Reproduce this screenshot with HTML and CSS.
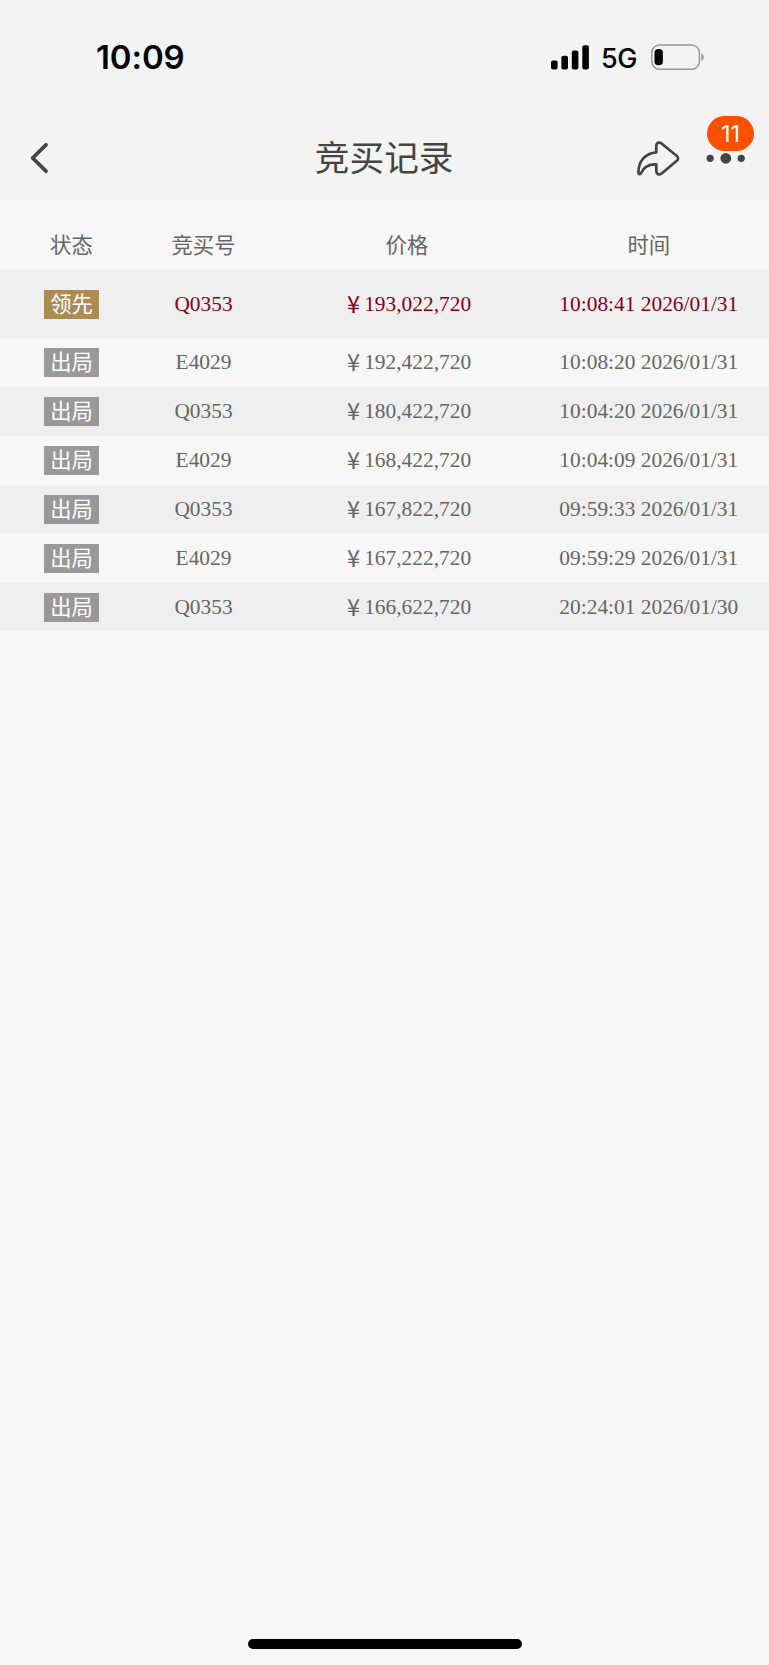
FILE: index.html
```html
<!DOCTYPE html>
<html lang="zh-CN">
<head>
<meta charset="utf-8">
<title>竞买记录</title>
<link rel="stylesheet" href="styles.css">
</head>
<body>
<div class="screen">
  <header class="top">
    <div class="status-bar">
      <span class="clock">10:09</span>
      <div class="status-right">
        <svg class="signal" viewBox="0 0 38 25" width="38" height="25">
          <rect x="0" y="15.4" width="6.6" height="9" rx="2"/>
          <rect x="10.4" y="10.7" width="6.6" height="13.7" rx="2"/>
          <rect x="20.8" y="5.6" width="6.6" height="18.8" rx="2"/>
          <rect x="31.3" y="0.2" width="6.6" height="24.2" rx="2"/>
        </svg>
        <span class="network">5G</span>
        <svg class="battery" viewBox="0 0 54 27" width="54" height="27">
          <rect x="0.8" y="0.9" width="47.6" height="24.4" rx="7.8" fill="none" stroke="#999" stroke-width="1.5"/>
          <rect x="3.5" y="4.9" width="8.4" height="16.4" rx="3.8" fill="#000"/>
          <path d="M50.3 9.2 C53.6 10.6 53.6 15.6 50.3 17 Z" fill="#999"/>
        </svg>
      </div>
    </div>
    <nav class="nav-bar">
      <svg class="back" viewBox="0 0 20 32" width="20" height="32">
        <path d="M17 2.8 L3.6 16 L17 29.2"/>
      </svg>
      <h1 class="title">竞买记录</h1>
      <div class="actions">
        <svg class="share" viewBox="0 0 44 36" width="44" height="36">
          <path d="M19.3 11.3 V5 C19.3 1.6 22.3 0.7 24.6 2.5 L39.8 15 C41.5 16.5 41.5 18.3 39.8 19.8 L24.6 32.5 C22.3 34.3 19.3 33.3 19.3 30 V23.3 C12 23 6.5 26 4 32.2 C3.4 33.7 1.4 33.3 1.4 31.5 C1.6 20 8.2 12.2 19.3 11.3 Z"/>
        </svg>
        <div class="more">
          <svg viewBox="0 0 40 12" width="40" height="12">
            <circle cx="4.2" cy="6.3" r="3.6"/>
            <circle cx="19.8" cy="6.3" r="5.4"/>
            <circle cx="35.2" cy="6.3" r="3.6"/>
          </svg>
          <span class="badge">11</span>
        </div>
      </div>
    </nav>
  </header>
  <main class="records">
    <div class="row head"><span>状态</span><span>竞买号</span><span>价格</span><span>时间</span></div>
    <div class="row lead"><span><b class="tag">领先</b></span><span>Q0353</span><span><i class="yen">¥</i>193,022,720</span><span>10:08:41 2026/01/31</span></div>
    <div class="row"><span><b class="tag">出局</b></span><span>E4029</span><span><i class="yen">¥</i>192,422,720</span><span>10:08:20 2026/01/31</span></div>
    <div class="row shade"><span><b class="tag">出局</b></span><span>Q0353</span><span><i class="yen">¥</i>180,422,720</span><span>10:04:20 2026/01/31</span></div>
    <div class="row"><span><b class="tag">出局</b></span><span>E4029</span><span><i class="yen">¥</i>168,422,720</span><span>10:04:09 2026/01/31</span></div>
    <div class="row shade"><span><b class="tag">出局</b></span><span>Q0353</span><span><i class="yen">¥</i>167,822,720</span><span>09:59:33 2026/01/31</span></div>
    <div class="row"><span><b class="tag">出局</b></span><span>E4029</span><span><i class="yen">¥</i>167,222,720</span><span>09:59:29 2026/01/31</span></div>
    <div class="row shade"><span><b class="tag">出局</b></span><span>Q0353</span><span><i class="yen">¥</i>166,622,720</span><span>20:24:01 2026/01/30</span></div>
  </main>
  <div class="home-indicator"></div>
</div>
</body>
</html>
```
FILE: styles.css
```css
* { box-sizing: border-box; }
body { margin: 0; background: #f7f7f7; }
svg { display: block; flex: none; }
.screen {
  width: 769px;
  height: 1665px;
  display: flex;
  flex-direction: column;
  overflow: hidden;
  font-family: "Liberation Serif", "Noto Sans CJK SC", serif;
  color: #666;
}
.top { height: 201px; background: #f3f3f3; flex: none; }
.status-bar {
  height: 115px;
  padding: 0 64px 0 96px;
  display: flex;
  align-items: center;
  justify-content: space-between;
  font-family: Inter, sans-serif;
  color: #000;
}
.clock { font-size: 33px; font-weight: 600; letter-spacing: -0.1px; padding-bottom: 1px; }
.status-right { display: flex; align-items: center; }
.network { margin: 1px 13px 0 12px; font-size: 27px; font-weight: 500; width: 37px; letter-spacing: -0.5px; }
.nav-bar {
  height: 86px;
  padding: 0 23.5px 0 29px;
  display: grid;
  grid-template-columns: 1fr 139px 1fr;
  align-items: center;
}
.back { fill: none; stroke: #444; stroke-width: 3.8; stroke-linecap: round; stroke-linejoin: round; }
.title {
  margin: 0 0 4px -3px;
  font: 400 34.7px/50px "Noto Sans CJK SC", sans-serif;
  color: #444;
  white-space: nowrap;
}
.actions { display: flex; align-items: center; justify-content: flex-end; gap: 25px; }
.share { fill: none; stroke: #444; stroke-width: 2.7; stroke-linejoin: round; margin-top: 1px; }
.more { position: relative; fill: #444; }
.badge {
  position: absolute;
  left: 1.5px;
  top: -36.5px;
  width: 47px;
  height: 35px;
  border-radius: 17.5px;
  background: #ff5000;
  color: #fff;
  font: 400 23.5px/36px Inter, sans-serif;
  text-align: center;
}
.records { padding-top: 0.4px; }
.row {
  height: 48.85px;
  display: grid;
  grid-template-columns: 143px 121px 286px 197.6px;
  align-items: center;
  justify-items: center;
  font-size: 21.4px;
  white-space: nowrap;
}
.row > span { display: flex; align-items: center; }
.head { height: 69px; padding-top: 15px; font-family: "Noto Sans CJK SC", sans-serif; }
.lead { height: 68px; background: #efefef; color: #85001b; }
.shade { background: #efefef; }
.tag {
  width: 55px;
  height: 29px;
  font: 400 21.3px/25px "Noto Sans CJK SC", sans-serif;
  text-align: center;
  color: #fff;
  background: #999;
}
.lead .tag { background: #aa8c54; }
.yen {
  width: 21.3px;
  padding-bottom: 3px;
  font: normal 400 23.5px/24px "Noto Sans CJK SC", sans-serif;
  text-align: center;
}
.home-indicator {
  margin: auto 0 16px 247.5px;
  width: 274px;
  height: 10px;
  border-radius: 5px;
  background: #000;
}
```
